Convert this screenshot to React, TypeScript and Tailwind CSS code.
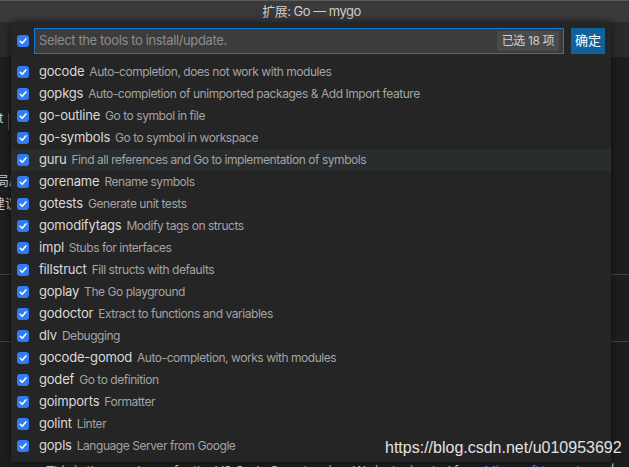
import React from "react";

const rows: [string, string][] = [
  ["gocode", "Auto-completion, does not work with modules"],
  ["gopkgs", "Auto-completion of unimported packages & Add Import feature"],
  ["go-outline", "Go to symbol in file"],
  ["go-symbols", "Go to symbol in workspace"],
  ["guru", "Find all references and Go to implementation of symbols"],
  ["gorename", "Rename symbols"],
  ["gotests", "Generate unit tests"],
  ["gomodifytags", "Modify tags on structs"],
  ["impl", "Stubs for interfaces"],
  ["fillstruct", "Fill structs with defaults"],
  ["goplay", "The Go playground"],
  ["godoctor", "Extract to functions and variables"],
  ["dlv", "Debugging"],
  ["gocode-gomod", "Auto-completion, works with modules"],
  ["godef", "Go to definition"],
  ["goimports", "Formatter"],
  ["golint", "Linter"],
  ["gopls", "Language Server from Google"],
];

function Check() {
  return (
    <span className="flex h-[12px] w-[12px] shrink-0 items-center justify-center rounded-[3px] bg-[#2f7cf6]">
      <svg width="12" height="12" viewBox="0 0 12 12">
        <path d="M3.2 6.3 L5.2 8.3 L8.9 3.9" fill="none" stroke="#ffffff" strokeWidth="1.6" strokeLinecap="round" strokeLinejoin="round" />
      </svg>
    </span>
  );
}

export default function App() {
  return (
    <div
      className="relative h-[467px] w-[629px] overflow-hidden bg-[#1e1e1e]"
      style={{ fontFamily: "Inter, 'Noto Sans CJK SC', sans-serif" }}
    >
      {/* title bar */}
      <div className="flex h-[22px] items-center justify-center border-t border-[#5a5a5a] bg-[#3a3a3a] pr-[6px] text-[13px] tracking-[-0.5px] text-[#cfcfcf]">
        扩展: Go — mygo
      </div>
      {/* backdrop editor */}
      <div className="h-[35px] bg-[#2b2b2b]" />
      <div className="relative flex h-[404px] flex-col text-[13px] text-[#cccccc]">
        <div className="ml-[8px] mt-[56px] h-[17px] w-px bg-[#555]" />
        <div className="-mt-[19px] ml-[-6px] leading-[14px]">rt</div>
        <div className="ml-[-4px] mt-[48px] leading-[14px]">局局</div>
        <div className="ml-[-8px] mt-[9px] leading-[14px]">建议</div>
        <div className="mt-[64px] h-px w-full bg-[#444]" />
        <div className="mt-[66px] h-px w-full bg-[#444]" />
      </div>
      <div className="flex items-start pl-[33px] text-[13px] tracking-[-0.35px] text-[#cccccc]">
        <div className="mr-[13px] h-[20px] w-[4px] bg-[#0063a5]" />
        <div className="whitespace-nowrap leading-[20px]">
          This is the <b>new</b> home for the VS Code Go extension. We just migrated from{" "}
          <span className="text-[#3794ff]">Microsoft/vscode-go</span> | co
        </div>
      </div>

      {/* quick pick overlay */}
      <div className="absolute left-[11px] top-[22px] flex h-[440px] w-[600px] flex-col bg-[#252526] shadow-[0_0_8px_rgba(0,0,0,0.6)]">
        <div className="mt-[6px] flex h-[26px] items-center">
          <div className="ml-[6px] mr-[5px]">
            <Check />
          </div>
          <div className="flex h-[26px] w-[530px] items-center justify-between border border-[#0e7ad3] bg-[#3c3c3c] pl-[4px] pr-[4px]">
            <span className="text-[13px] tracking-[-0.37px] text-[#8c8c8c]">Select the tools to install/update.</span>
            <span className="flex h-[20px] items-center rounded-[2px] bg-[#4a4a4a] px-[5px] text-[12px] tracking-[-0.4px] text-[#d0d0d0]">
              已选 18 项
            </span>
          </div>
          <div className="ml-[7px] flex h-[26px] w-[34px] items-center justify-center bg-[#0e639c] text-[13px] text-white">
            确定
          </div>
        </div>
        <div className="mt-[7px] flex flex-col">
          {rows.map(([name, desc]) => (
            <div
              key={name}
              className={`flex h-[22px] items-center whitespace-nowrap ${name === "guru" ? "bg-[#2a2d2e]" : ""}`}
            >
              <div className="ml-[6px] mr-[10px]">
                <Check />
              </div>
              <span className="text-[13px] tracking-[-0.2px] text-[#dadada]">{name}</span>
              <span className="ml-[5px] text-[12px] tracking-[-0.45px] text-[#a3a3a3]">{desc}</span>
            </div>
          ))}
        </div>
      </div>

      {/* watermark */}
      <div
        className="absolute left-[385px] top-[436px] text-[16px] text-[#e2e2e2]"
        style={{ fontFamily: "'Liberation Sans', Arial, sans-serif" }}
      >
        https://blog.csdn.net/u010953692
      </div>
    </div>
  );
}
